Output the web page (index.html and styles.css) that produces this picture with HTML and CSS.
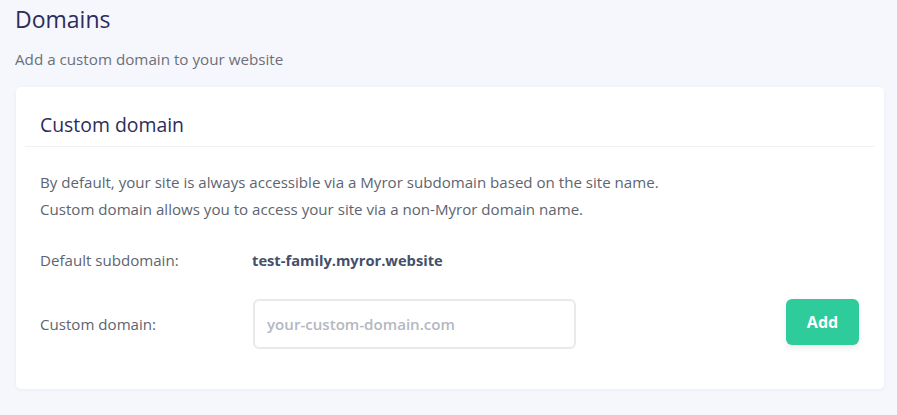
FILE: index.html
```
<!DOCTYPE html>
<html>
<head>
<meta charset="utf-8">
<link rel="stylesheet" href="styles.css">
</head>
<body>
<div class="page">
  <h1 class="title">Domains</h1>
  <p class="subtitle">Add a custom domain to your website</p>
  <div class="card">
    <div class="card-header">Custom domain</div>
    <div class="card-body">
      <p class="desc">By default, your site is always accessible via a Myror subdomain based on the site name.<br>Custom domain allows you to access your site via a non-Myror domain name.</p>
      <div class="row row-default">
        <div class="label">Default subdomain:</div>
        <div class="value">test-family.myror.website</div>
      </div>
      <div class="row row-custom">
        <div class="label">Custom domain:</div>
        <input class="input" type="text" placeholder="your-custom-domain.com">
        <div class="spacer"></div>
        <button class="btn">Add</button>
      </div>
    </div>
  </div>
</div>
</body>
</html>
```
FILE: styles.css
```
* { box-sizing: border-box; }
html, body { margin: 0; padding: 0; }
body {
  background: #f6f7fc;
  font-family: "Open Sans", "Noto Sans", sans-serif;
  width: 897px;
  height: 415px;
  overflow: hidden;
}
.page { padding: 4px 13px 0 16px; }
.title {
  margin: 0 0 0 -1px;
  font-size: 23px;
  font-weight: 500;
  color: #2e2c5b;
  line-height: 30px;
}
.subtitle {
  margin: 13px 0 0 -1px;
  font-size: 15.2px;
  color: #6b7079;
  line-height: 24px;
}
.card {
  margin-top: 16px;
  background: #fff;
  border-radius: 5px;
  box-shadow: 0 1px 4px rgba(40, 45, 90, 0.05);
  height: 302px;
  padding: 0 9px;
}
.card-header {
  padding: 25px 15px 0;
  height: 60px;
  font-size: 19.4px;
  font-weight: 500;
  color: #2e2c5b;
  line-height: 26px;
  border-bottom: 1px solid #f0f1f5;
}
.card-body { padding: 22px 16px 0 15px; }
.desc {
  margin: 0;
  font-size: 15.1px;
  line-height: 27px;
  color: #5d6470;
}
.row { display: flex; align-items: center; }
.row-default { margin-top: 25px; height: 24px; }
.label {
  width: 212px;
  font-size: 15.1px;
  color: #5d6470;
}
.value {
  font-weight: 700;
  font-size: 14.7px;
  color: #44506a;
}
.row-custom { margin-top: 27px; height: 50px; }
.input {
  width: 323px;
  height: 50px;
  border: 2px solid #e8e9ec;
  border-radius: 6px;
  padding: 0 12px;
  font-family: "Open Sans", sans-serif;
  font-size: 15.1px;
  font-weight: 600;
  margin-left: 1px;
  outline: none;
}
.input::placeholder { color: #b3b8c1; }
.spacer { flex: 1; }
.btn {
  width: 73px;
  height: 46px;
  margin-top: -4px;
  border: none;
  border-radius: 6px;
  background: #2ecc9a;
  color: #fff;
  font-family: "Open Sans", sans-serif;
  font-weight: 700;
  font-size: 16px;
  box-shadow: 0 3px 6px rgba(0, 0, 0, 0.08);
}
```
